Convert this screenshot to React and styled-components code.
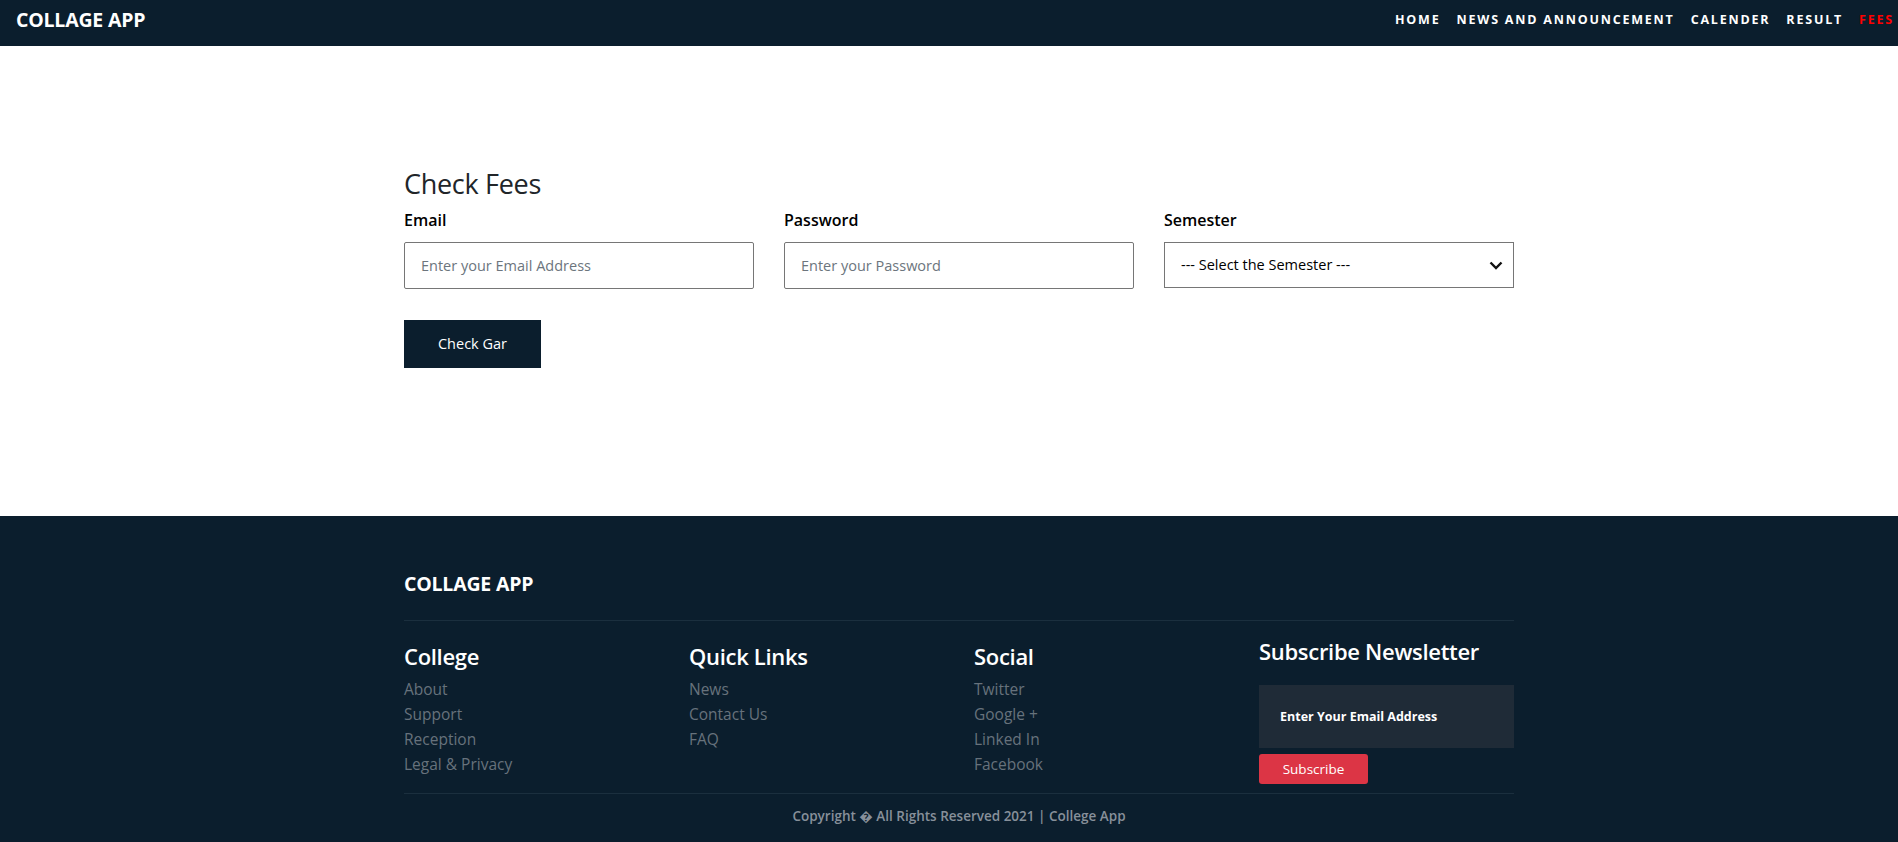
import React from "react";
import styled, { createGlobalStyle } from "styled-components";

const Global = createGlobalStyle`
  * { box-sizing: border-box; }
  body {
    margin: 0;
    font-family: "Open Sans", "Noto Sans", sans-serif;
    color: #212529;
    background: #fff;
  }
`;

const NavBar = styled.nav`
  height: 46px;
  background: #0b1e2d;
  display: flex;
  align-items: center;
  justify-content: space-between;
  padding: 0 0 8px 16px;
`;

const Brand = styled.a`
  color: #fff;
  font-weight: 700;
  font-size: 19.5px;
  letter-spacing: -0.2px;
  text-decoration: none;
`;

const NavLinks = styled.ul`
  display: flex;
  list-style: none;
  margin: 0;
  padding: 0;
`;

const NavLink = styled.a`
  display: block;
  padding: 0 ${(p) => (p.$last ? "4px" : "8px")} 0 8px;
  font-size: 12.5px;
  font-weight: 700;
  letter-spacing: 1.8px;
  text-transform: uppercase;
  color: ${(p) => (p.$active ? "#ff0000" : "#fff")};
  text-decoration: none;
`;

const Container = styled.div`
  width: 1110px;
  margin-left: calc(50% - 545px);
`;

const Main = styled.main`
  padding: 121px 0 148px;
`;

const Title = styled.h3`
  margin: 0 0 7px;
  font-size: 27px;
  font-weight: 500;
  line-height: 33.6px;
  letter-spacing: -0.3px;
`;

const FormRow = styled.div`
  display: grid;
  grid-template-columns: repeat(3, 350px);
  column-gap: 30px;
`;

const Field = styled.div`
  display: flex;
  flex-direction: column;
`;

const Label = styled.label`
  font-size: 16px;
  font-weight: 600;
  line-height: 24px;
  margin-bottom: 10px;
  color: #000;
`;

const Input = styled.input`
  height: 47px;
  border: 1px solid #767676;
  border-radius: 2px;
  padding: 0 16px;
  font-family: inherit;
  font-size: 14.5px;
  color: #212529;
  outline: none;
  &::placeholder { color: #6c757d; }
`;

const SelectWrap = styled.div`
  position: relative;
  height: 46px;
`;

const Select = styled.select`
  width: 100%;
  height: 46px;
  appearance: none;
  border: 1px solid #767676;
  border-radius: 0;
  background: #fff;
  padding: 0 16px;
  font-family: inherit;
  font-size: 14.5px;
  color: #000;
  outline: none;
`;

const Chevron = styled.svg`
  position: absolute;
  right: 10px;
  top: 15px;
  pointer-events: none;
`;

const SubmitButton = styled.button`
  margin-top: 31px;
  width: 137px;
  height: 48px;
  border: none;
  background: #0b1e2d;
  color: #fff;
  font-family: inherit;
  font-size: 14.5px;
`;

const Footer = styled.footer`
  background: #0b1e2d;
  padding: 54px 0 26px;
`;

const FooterBrand = styled.div`
  color: #fff;
  font-weight: 700;
  font-size: 19.5px;
  letter-spacing: -0.2px;
  line-height: 27px;
  margin-bottom: 23px;
`;

const Divider = styled.hr`
  margin: 0;
  border: none;
  border-top: 1px solid #1b2f3e;
`;

const FooterRow = styled.div`
  display: grid;
  grid-template-columns: repeat(4, 255px);
  column-gap: 30px;
  padding-bottom: 9px;
`;

const Column = styled.div`
  padding-top: ${(p) => p.$top}px;
  display: flex;
  flex-direction: column;
`;

const ColHeading = styled.h4`
  margin: 0 0 ${(p) => p.$gap}px;
  color: #fff;
  font-size: 22px;
  font-weight: 600;
  line-height: 29px;
  letter-spacing: -0.3px;
`;

const FooterLink = styled.a`
  color: #67727c;
  font-size: 15.5px;
  line-height: 25px;
  text-decoration: none;
`;

const NewsInput = styled.input`
  height: 63px;
  border: none;
  background: #1f2b37;
  padding: 0 21px;
  font-family: inherit;
  font-size: 12.5px;
  font-weight: 700;
  color: #fff;
  outline: none;
  &::placeholder { color: #fff; opacity: 1; }
`;

const SubscribeButton = styled.button`
  margin-top: 6px;
  width: 109px;
  height: 30px;
  border: none;
  border-radius: 3px;
  background: #dc3545;
  color: #fff;
  font-family: inherit;
  font-size: 13.5px;
`;

const Copyright = styled.p`
  margin: 12px 0 0;
  text-align: center;
  color: #87909a;
  font-size: 13.5px;
  font-weight: 600;
  line-height: 21px;
`;

const navItems = ["Home", "News and Announcement", "Calender", "Result", "Fees"];

const columns = [
  { title: "College", links: ["About", "Support", "Reception", "Legal & Privacy"] },
  { title: "Quick Links", links: ["News", "Contact Us", "FAQ"] },
  { title: "Social", links: ["Twitter", "Google +", "Linked In", "Facebook"] },
];

export default function App() {
  return (
    <>
      <Global />
      <NavBar>
        <Brand href="#">COLLAGE APP</Brand>
        <NavLinks>
          {navItems.map((item, i) => (
            <li key={item}>
              <NavLink
                href="#"
                $active={item === "Fees"}
                $last={i === navItems.length - 1}
              >
                {item}
              </NavLink>
            </li>
          ))}
        </NavLinks>
      </NavBar>

      <Main>
        <Container>
          <Title>Check Fees</Title>
          <FormRow>
            <Field>
              <Label>Email</Label>
              <Input type="email" placeholder="Enter your Email Address" />
            </Field>
            <Field>
              <Label>Password</Label>
              <Input type="password" placeholder="Enter your Password" />
            </Field>
            <Field>
              <Label>Semester</Label>
              <SelectWrap>
                <Select defaultValue="">
                  <option value="">--- Select the Semester ---</option>
                </Select>
                <Chevron width="16" height="16" viewBox="0 0 16 16">
                  <path
                    d="M2.5 5.5 L8 11 L13.5 5.5"
                    fill="none"
                    stroke="#111"
                    strokeWidth="2.4"
                  />
                </Chevron>
              </SelectWrap>
            </Field>
          </FormRow>
          <SubmitButton>Check Gar</SubmitButton>
        </Container>
      </Main>

      <Footer>
        <Container>
          <FooterBrand>COLLAGE APP</FooterBrand>
          <Divider />
          <FooterRow>
            {columns.map((col) => (
              <Column key={col.title} $top={21}>
                <ColHeading $gap={6}>{col.title}</ColHeading>
                {col.links.map((l) => (
                  <FooterLink key={l} href="#">
                    {l}
                  </FooterLink>
                ))}
              </Column>
            ))}
            <Column $top={16}>
              <ColHeading $gap={19}>Subscribe Newsletter</ColHeading>
              <NewsInput placeholder="Enter Your Email Address" />
              <div>
                <SubscribeButton>Subscribe</SubscribeButton>
              </div>
            </Column>
          </FooterRow>
          <Divider />
          <Copyright>{"Copyright \uFFFD All Rights Reserved 2021 | College App"}</Copyright>
        </Container>
      </Footer>
    </>
  );
}
